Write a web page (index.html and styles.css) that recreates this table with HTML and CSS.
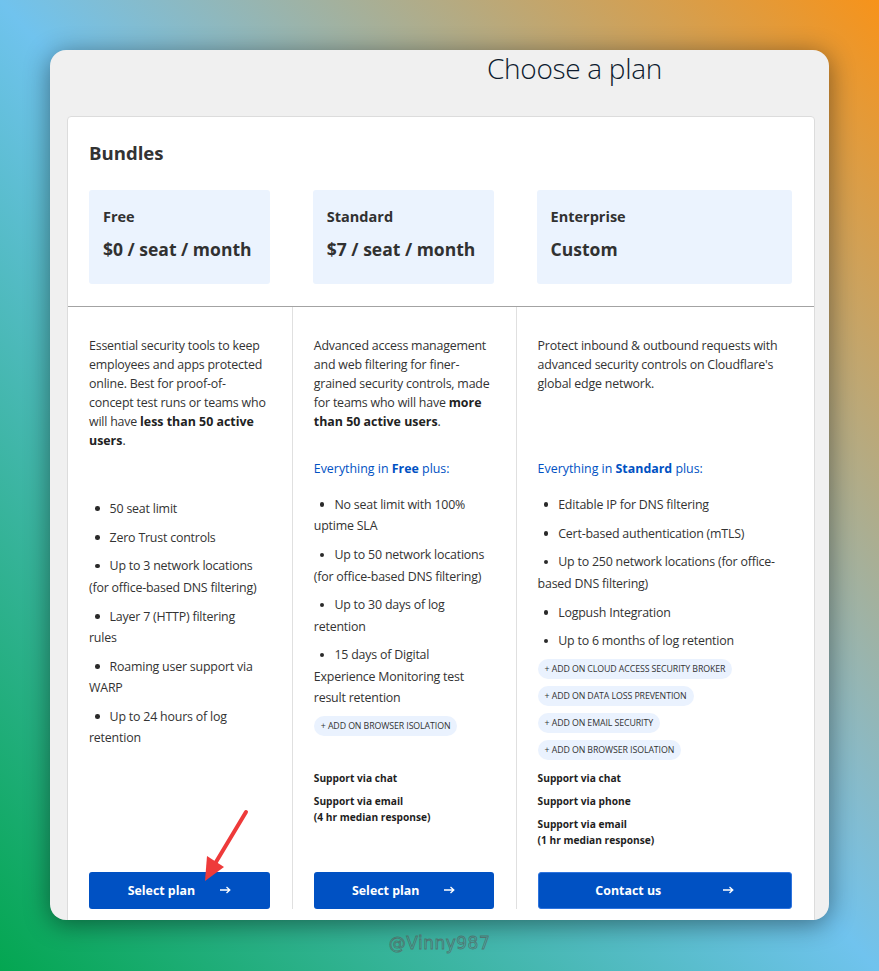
FILE: index.html
```html
<!DOCTYPE html>
<html lang="en">
<head>
<meta charset="utf-8">
<title>Choose a plan</title>
<link rel="stylesheet" href="styles.css">
</head>
<body>
<div class="window">
  <h1 class="title">Choose a plan</h1>
  <section class="card">
    <div class="card-top">
      <h2 class="bundles">Bundles</h2>
      <div class="tiers">
        <div class="tier-cell"><div class="tier"><div class="tier-name">Free</div><div class="tier-price">$0 / seat / month</div></div></div>
        <div class="tier-cell"><div class="tier"><div class="tier-name">Standard</div><div class="tier-price">$7 / seat / month</div></div></div>
        <div class="tier-cell"><div class="tier"><div class="tier-name">Enterprise</div><div class="tier-price">Custom</div></div></div>
      </div>
    </div>
    <div class="plans">
      <div class="plan">
        <p class="desc">Essential security tools to keep employees and apps protected online. Best for proof-of-concept test runs or teams who will have <b>less than 50 active users</b>.</p>
        <div class="features">
          <ul class="list list--spaced">
            <li>50 seat limit</li>
            <li>Zero Trust controls</li>
            <li>Up to 3 network locations (for office-based DNS filtering)</li>
            <li>Layer 7 (HTTP) filtering rules</li>
            <li>Roaming user support via WARP</li>
            <li>Up to 24 hours of log retention</li>
          </ul>
        </div>
        <div class="support"></div>
        <a class="btn" href="#"><span>Select plan</span><svg class="btn-arrow" width="11" height="8" viewBox="0 0 11 8" aria-hidden="true"><path d="M0 4h9.5M6.5 1l3.3 3-3.3 3" fill="none" stroke="#fff" stroke-width="1.3"/></svg></a>
      </div>
      <div class="plan plan--bordered">
        <p class="desc">Advanced access management and web filtering for finer-grained security controls, made for teams who will have <b>more than 50 active users</b>.</p>
        <div class="features">
          <p class="plus">Everything in <b>Free</b> plus:</p>
          <ul class="list">
            <li>No seat limit with 100% uptime SLA</li>
            <li>Up to 50 network locations (for office-based DNS filtering)</li>
            <li>Up to 30 days of log retention</li>
            <li>15 days of Digital Experience Monitoring test result retention</li>
          </ul>
          <div class="addons">
            <span class="addon">+ ADD ON BROWSER ISOLATION</span>
          </div>
        </div>
        <div class="support">
          <p>Support via chat</p>
          <p>Support via email<br>(4 hr median response)</p>
        </div>
        <a class="btn" href="#"><span>Select plan</span><svg class="btn-arrow" width="11" height="8" viewBox="0 0 11 8" aria-hidden="true"><path d="M0 4h9.5M6.5 1l3.3 3-3.3 3" fill="none" stroke="#fff" stroke-width="1.3"/></svg></a>
      </div>
      <div class="plan plan--bordered">
        <p class="desc">Protect inbound &amp; outbound requests with advanced security controls on Cloudflare's global edge network.</p>
        <div class="features">
          <p class="plus">Everything in <b>Standard</b> plus:</p>
          <ul class="list">
            <li>Editable IP for DNS filtering</li>
            <li>Cert-based authentication (mTLS)</li>
            <li>Up to 250 network locations (for office-based DNS filtering)</li>
            <li>Logpush Integration</li>
            <li>Up to 6 months of log retention</li>
          </ul>
          <div class="addons">
            <span class="addon">+ ADD ON CLOUD ACCESS SECURITY BROKER</span>
            <span class="addon">+ ADD ON DATA LOSS PREVENTION</span>
            <span class="addon">+ ADD ON EMAIL SECURITY</span>
            <span class="addon">+ ADD ON BROWSER ISOLATION</span>
          </div>
        </div>
        <div class="support">
          <p>Support via chat</p>
          <p>Support via phone</p>
          <p>Support via email<br>(1 hr median response)</p>
        </div>
        <a class="btn btn--wide" href="#"><span>Contact us</span><svg class="btn-arrow" width="11" height="8" viewBox="0 0 11 8" aria-hidden="true"><path d="M0 4h9.5M6.5 1l3.3 3-3.3 3" fill="none" stroke="#fff" stroke-width="1.3"/></svg></a>
      </div>
    </div>
  </section>
</div>
<div class="watermark">@Vinny987</div>
<svg class="annotation" width="879" height="971" viewBox="0 0 879 971" aria-hidden="true">
  <line x1="246" y1="812" x2="216" y2="862" stroke="#ee3a3a" stroke-width="4" stroke-linecap="round"/>
  <polygon points="205,881 207,856 224,867" fill="#ee3a3a"/>
</svg>
</body>
</html>
```

FILE: styles.css
```css
* { box-sizing: border-box; }

html, body { margin: 0; }

body {
  width: 879px;
  height: 971px;
  padding: 50px 0 0 50px;
  overflow: hidden;
  position: relative;
  background: linear-gradient(to bottom left, #f7931a 0%, #70c3ee 50%, #04a651 100%);
  font-family: "Open Sans", "Noto Sans", sans-serif;
  color: #333;
}

.window {
  width: 779px;
  height: 870px;
  background: #f0f0f0;
  border-radius: 16px;
  overflow: hidden;
  padding: 0 14px 0 17px;
  box-shadow: 0 4px 26px rgba(0, 0, 0, 0.45);
}

.title {
  margin: 0;
  height: 40px;
  line-height: 36px;
  padding-left: 420px;
  font-size: 28px;
  font-weight: 300;
  color: #0d1b2e;
  letter-spacing: -0.3px;
}

.card {
  margin-top: 26px;
  background: #fff;
  border: 1px solid #dcdcdc;
  border-radius: 4px;
  height: 900px;
}

.card-top {
  padding: 24px 0 22px;
}

.bundles {
  margin: 0 22px 25px 21px;
  font-size: 18.6px;
  line-height: 24px;
  font-weight: 700;
  color: #333;
}

.tiers,
.plans {
  display: grid;
  grid-template-columns: 3fr 3fr 4fr;
}

.tier-cell {
  padding: 0 22px 0 21px;
}

.tier {
  height: 94px;
  background: #ebf3fe;
  border-radius: 3px;
  padding: 17px 14px 0;
  color: #313131;
}

.tier-name {
  font-size: 14.5px;
  font-weight: 700;
  line-height: 20px;
}

.tier-price {
  margin-top: 10px;
  font-size: 17.5px;
  font-weight: 700;
  line-height: 24px;
}

.plans {
  border-top: 1px solid #a3a3a3;
}

.plan {
  padding: 29px 22px 0 21px;
}

.plan--bordered {
  border-left: 1px solid #e0e0e0;
}

.desc {
  margin: 0;
  height: 114px;
  font-size: 12.4px;
  line-height: 19px;
  letter-spacing: -0.2px;
  color: #333;
}

.desc b {
  color: #222;
  letter-spacing: 0;
}

.features {
  display: flow-root;
  height: 319.5px;
}

.plus {
  margin: 9px 0 0;
  font-size: 12.4px;
  line-height: 19px;
  color: #0051c3;
}

.list {
  list-style: none;
  margin: 16px 0 0;
  padding: 0 7px 0 0;
  font-size: 12.4px;
  line-height: 21.4px;
  letter-spacing: -0.2px;
  color: #333;
}

.list--spaced {
  margin-top: 48px;
}

.list li {
  margin-bottom: 7.3px;
  text-indent: 6px;
}

.list li::before {
  content: "";
  display: inline-block;
  width: 4.6px;
  height: 4.6px;
  margin-right: 10px;
  border-radius: 50%;
  background: #2a2a2a;
  vertical-align: 2px;
}

.addons {
  margin-top: 4px;
  display: flex;
  flex-direction: column;
  align-items: flex-start;
  gap: 7px;
}

.addon {
  display: inline-block;
  height: 20px;
  line-height: 20px;
  padding: 0 7px;
  border-radius: 10px;
  background: #eaf2fe;
  font-size: 8.8px;
  color: #333;
  letter-spacing: -0.1px;
}

.support {
  height: 102px;
  font-size: 10.2px;
  font-weight: 700;
  line-height: 16.5px;
  color: #1e1e1e;
}

.support p {
  margin: 0 0 6.5px;
}

.btn {
  display: flex;
  justify-content: center;
  align-items: center;
  gap: 25px;
  height: 37px;
  border-radius: 3px;
  background: #0051c3;
  color: #fff;
  text-decoration: none;
  font-size: 12.4px;
  font-weight: 700;
}

.btn--wide {
  gap: 62px;
  border: 1px solid #2e74de;
}

.btn-arrow {
  display: block;
  flex: none;
}

.watermark {
  margin-top: 13px;
  width: 779px;
  text-align: center;
  font-family: "DejaVu Sans", sans-serif;
  font-size: 17px;
  letter-spacing: 0.5px;
  color: transparent;
  -webkit-text-stroke: 0.8px rgba(90, 90, 90, 0.7);
}

.annotation {
  position: absolute;
  left: 0;
  top: 0;
  pointer-events: none;
}
```
